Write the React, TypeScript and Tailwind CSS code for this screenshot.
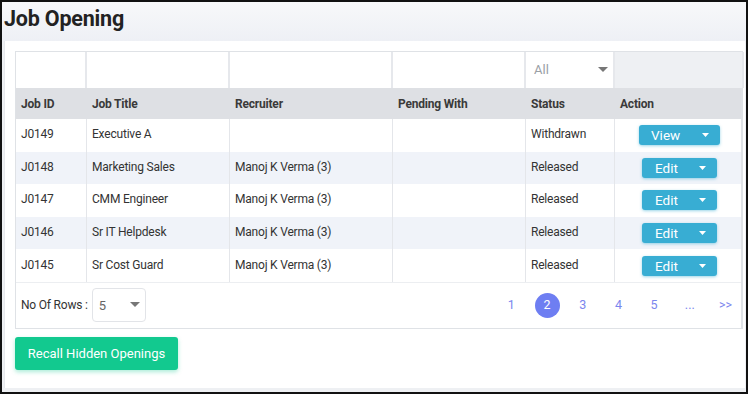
import React from "react";

const cols = [71, 143, 163, 133, 89, 129];

const rows = [
  { id: "J0149", title: "Executive A", rec: "", pend: "", status: "Withdrawn", action: "View" },
  { id: "J0148", title: "Marketing Sales", rec: "Manoj K Verma (3)", pend: "", status: "Released", action: "Edit" },
  { id: "J0147", title: "CMM Engineer", rec: "Manoj K Verma (3)", pend: "", status: "Released", action: "Edit" },
  { id: "J0146", title: "Sr IT Helpdesk", rec: "Manoj K Verma (3)", pend: "", status: "Released", action: "Edit" },
  { id: "J0145", title: "Sr Cost Guard", rec: "Manoj K Verma (3)", pend: "", status: "Released", action: "Edit" },
];

function Caret({ color = "#7a7a7a" }: { color?: string }) {
  return (
    <svg width="10" height="6" viewBox="0 0 10 6">
      <path d="M0 0 L10 0 L5 5 Z" fill={color} />
    </svg>
  );
}

export default function App() {
  const headers = ["Job ID", "Job Title", "Recruiter", "Pending With", "Status", "Action"];
  return (
    <div
      className="w-[748px] h-[394px] border-2 border-[#111] bg-[#eef0f3] flex flex-col overflow-hidden text-[#333]"
      style={{ fontFamily: "Roboto, 'Liberation Sans', sans-serif" }}
    >
      <div className="h-[39px] shrink-0 bg-gradient-to-b from-[#f7f8fa] to-[#eef0f5] pl-[2px] pt-[4px]">
        <h1 className="text-[21.5px] font-bold text-[#222] leading-[26px] tracking-[-0.2px]">Job Opening</h1>
      </div>
      <div className="ml-[2px] mr-[1px] h-[347px] bg-white border-l border-[#e6e8ec] pt-[10px] pl-[10px] flex flex-col">
        <div className="w-[728px] border border-[#dfe2e6] border-r-[2px]">
          {/* filter row */}
          <div className="flex h-[36px] bg-[#eef0f3]">
            {cols.map((w, i) => (
              <div
                key={i}
                style={{ width: w }}
                className={`h-full shrink-0 border-r-[2px] border-[#e6e8ec] flex items-center ${
                  i === 5 ? "bg-[#eef0f3] border-r-0" : "bg-white"
                }`}
              >
                {i === 4 && (
                  <div className="flex w-full items-center justify-between pl-[8px] pr-[5px] text-[13px] text-[#9aa0a6]">
                    <span>All</span>
                    <Caret color="#777" />
                  </div>
                )}
              </div>
            ))}
          </div>
          {/* header row */}
          <div className="flex h-[31px] bg-[#dee0e4]">
            {headers.map((h, i) => (
              <div
                key={h}
                style={{ width: cols[i] }}
                className="shrink-0 flex items-center pl-[5px] text-[12px] tracking-[-0.2px] font-bold text-[#3a3a3a]"
              >
                {h}
              </div>
            ))}
          </div>
          {rows.map((r, ri) => (
            <div
              key={r.id}
              className={`flex h-[32.6px] ${ri % 2 === 1 ? "bg-[#f0f3f9]" : "bg-white"}`}
            >
              {[r.id, r.title, r.rec, r.pend, r.status].map((v, i) => (
                <div
                  key={i}
                  style={{ width: cols[i] }}
                  className="shrink-0 h-full border-r border-[#e4e6ea] flex items-center pl-[5px] pb-[2px] text-[12px] tracking-[-0.2px] text-[#333]"
                >
                  {v}
                </div>
              ))}
              <div style={{ width: cols[5] }} className="shrink-0 h-full flex items-center justify-center">
                <div
                  className={`${
                    r.action === "View" ? "w-[81px] pl-[12px]" : "w-[75px] pl-[13px]"
                  } h-[20px] rounded-[3px] bg-[#38add3] shadow-[0_1px_3px_rgba(56,173,211,0.5)] flex items-center justify-between pr-[11px] text-white text-[13.5px]`}
                >
                  <span>{r.action}</span>
                  <svg width="7" height="4" viewBox="0 0 7 4">
                    <path d="M0 0 L7 0 L3.5 4 Z" fill="#fff" />
                  </svg>
                </div>
              </div>
            </div>
          ))}
          {/* pagination */}
          <div className="flex h-[46px] items-center bg-white border-t border-[#eceef1] pl-[5px] pr-[3px]">
            <span className="text-[12px] tracking-[-0.2px] text-[#333]">No Of Rows :</span>
            <div className="ml-[4px] w-[54px] h-[34px] rounded-[4px] border border-[#e2e4e8] flex items-center justify-between pl-[6px] pr-[5px]">
              <span className="text-[13px] text-[#666]">5</span>
              <Caret color="#777" />
            </div>
            <div className="ml-auto flex items-center text-[12.5px] text-[#7b86ee]">
              {["1", "2", "3", "4", "5", "...", ">>"].map((p) => (
                <div
                  key={p}
                  className={`w-[25px] h-[25px] ml-[10.7px] flex items-center justify-center rounded-full ${
                    p === "2" ? "bg-[#6e7ef2] text-white" : ""
                  }`}
                >
                  {p}
                </div>
              ))}
            </div>
          </div>
        </div>
        <div className="mt-[8px] w-[163px] h-[33px] rounded-[3px] bg-[#12c98f] shadow-[0_2px_4px_rgba(18,201,143,0.35)] flex items-center justify-center text-white text-[13px] font-normal">
          Recall Hidden Openings
        </div>
      </div>
    </div>
  );
}
